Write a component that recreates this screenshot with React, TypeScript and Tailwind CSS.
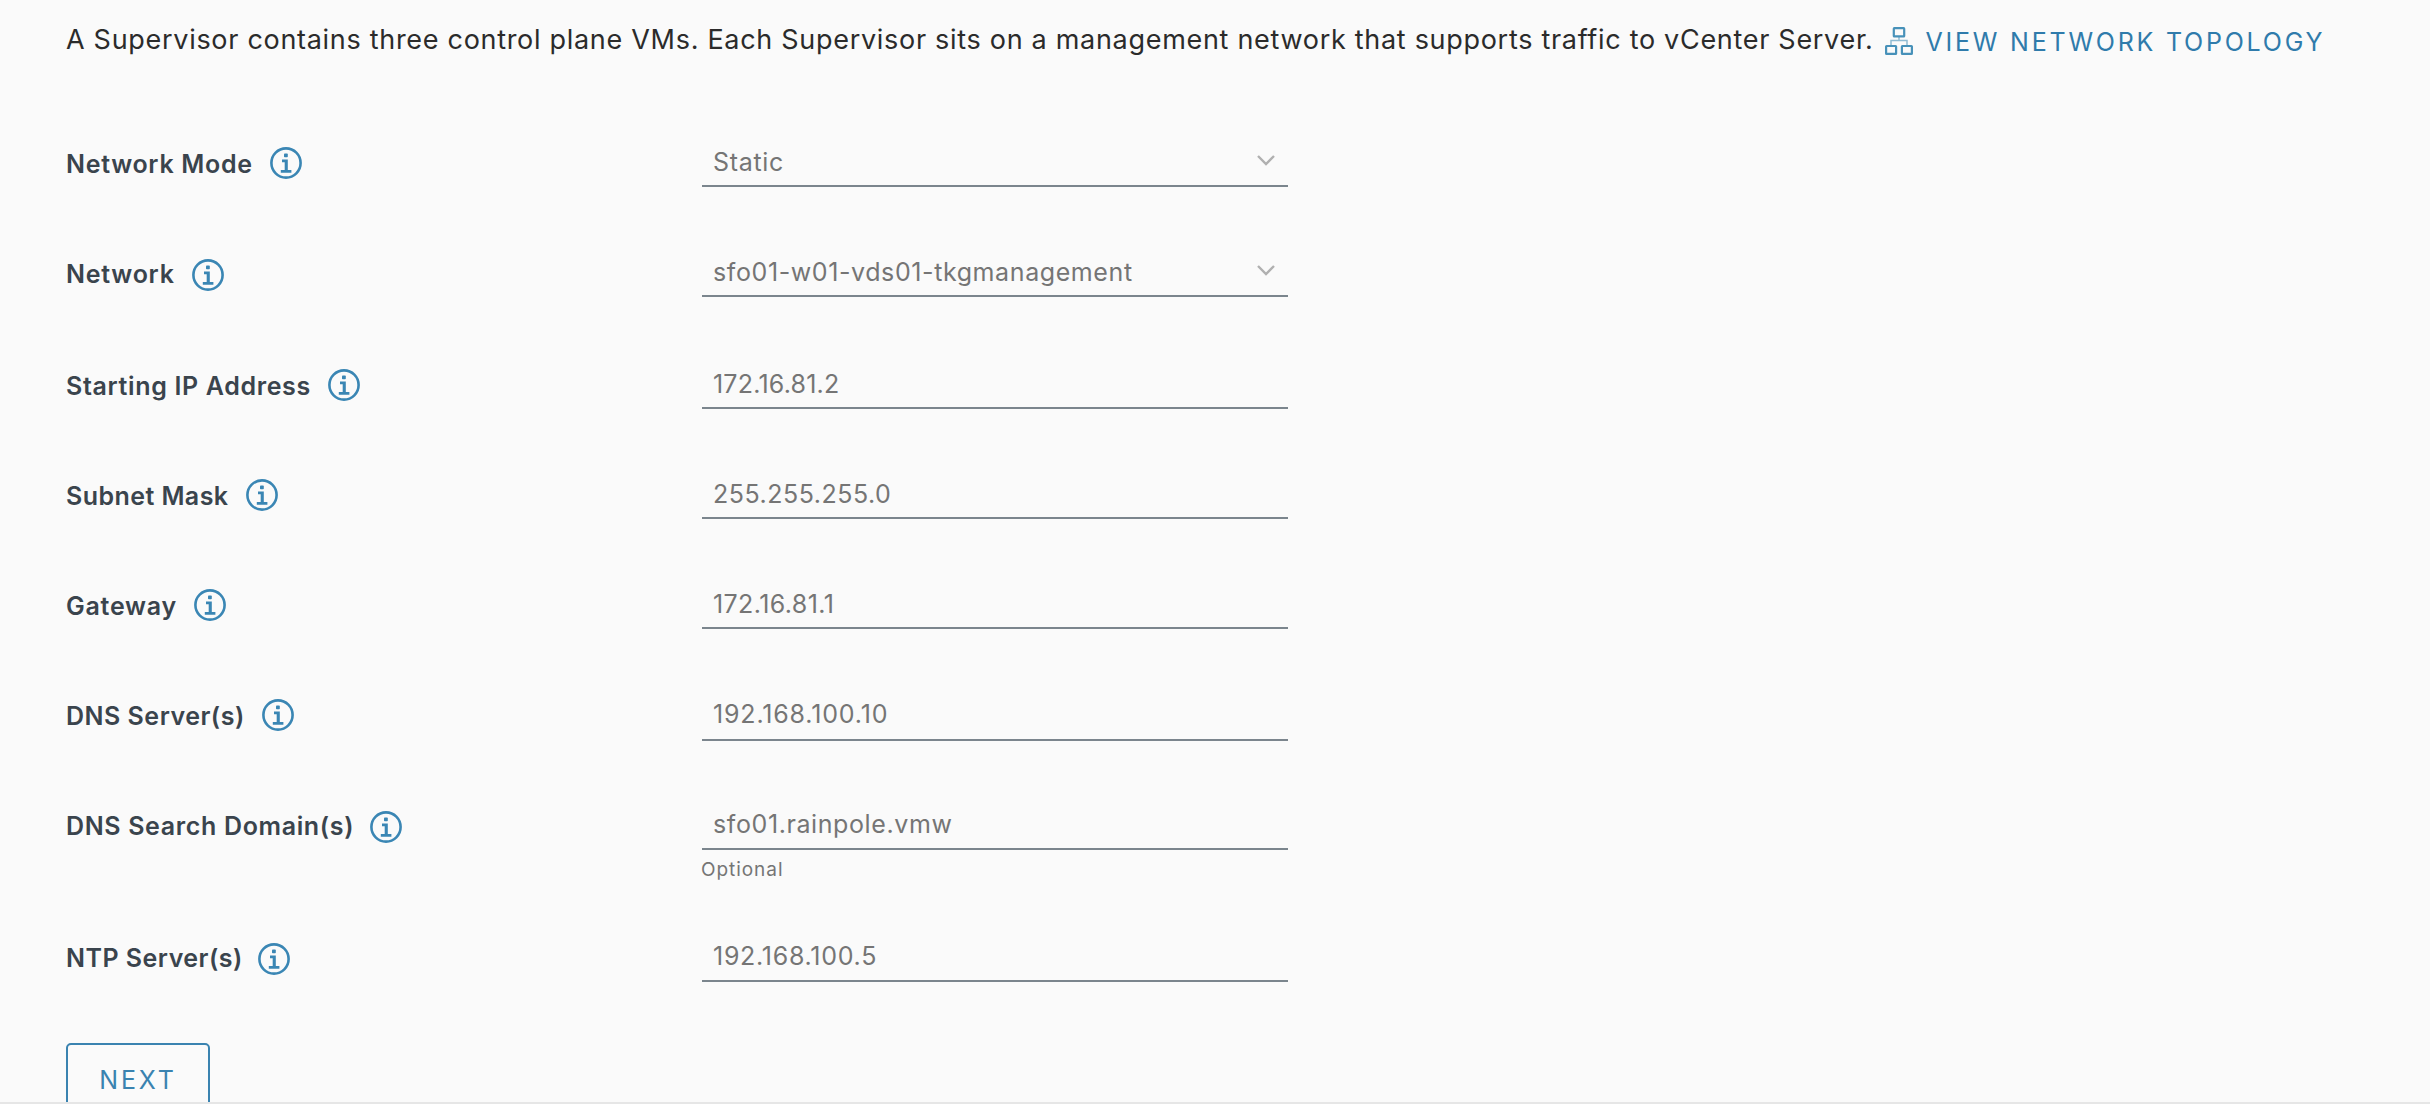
type Row = {
  label: string;
  value: string;
  select?: boolean;
  helper?: string;
  row: string;
  labelCls: string;
  iconCls: string;
  valueCls: string;
};

const rows: Row[] = [
  { label: "Network Mode", value: "Static", select: true, row: "h-[110px]", labelCls: "mb-2 tracking-[0.7px]", iconCls: "mb-2 ml-[17px]", valueCls: "pb-2 tracking-[0.68px]" },
  { label: "Network", value: "sfo01-w01-vds01-tkgmanagement", select: true, row: "h-[110px]", labelCls: "mb-2 tracking-[0.75px]", iconCls: "mb-1.5 ml-[17px]", valueCls: "pb-2 tracking-[0.6px]" },
  { label: "Starting IP Address", value: "172.16.81.2", row: "h-[112px]", labelCls: "mb-2 tracking-[0.65px]", iconCls: "mb-2 ml-[17px]", valueCls: "pb-2 tracking-[0.2px]" },
  { label: "Subnet Mask", value: "255.255.255.0", row: "h-[110px]", labelCls: "mb-2 tracking-[0.43px]", iconCls: "mb-2 ml-[17.5px]", valueCls: "pb-2 tracking-[0.51px]" },
  { label: "Gateway", value: "172.16.81.1", row: "h-[110px]", labelCls: "mb-2 tracking-[0.75px]", iconCls: "mb-2 ml-[17px]", valueCls: "pb-2 tracking-[0.4px]" },
  { label: "DNS Server(s)", value: "192.168.100.10", row: "h-[112px]", labelCls: "mb-2.5 tracking-[0.5px]", iconCls: "mb-2.5 ml-[17px]", valueCls: "pb-2.5 tracking-[0.83px]" },
  { label: "DNS Search Domain(s)", value: "sfo01.rainpole.vmw", helper: "Optional", row: "h-[109px]", labelCls: "mb-[9px] tracking-[0.65px]", iconCls: "mb-[7px] ml-4", valueCls: "pb-[9px] tracking-[0.6px]" },
  { label: "NTP Server(s)", value: "192.168.100.5", row: "h-[100px]", labelCls: "mb-[9px] tracking-[0.48px]", iconCls: "mb-[7px] ml-[15.5px]", valueCls: "pb-[9px] tracking-[0.72px]" },
];

function InfoIcon({ className }: { className: string }) {
  return (
    <svg viewBox="0 0 32 32" className={`size-8 shrink-0 text-[#3a86b4] ${className}`} fill="currentColor">
      <circle cx="16" cy="16" r="14.6" fill="none" stroke="currentColor" strokeWidth="2.6" />
      <rect x="14" y="6.6" width="3.8" height="3.6" rx="0.8" />
      <path d="M12 12.5h5.8v10.5h3.6v2.8H10.8v-2.8h3.9v-7.8H12z" />
    </svg>
  );
}

function TopologyIcon() {
  return (
    <svg viewBox="0 0 28 28" className="mt-[3px] ml-[11px] size-7 shrink-0" fill="none" stroke="#4791b9" strokeWidth="2.2">
      <rect x="8.8" y="1.2" width="10.4" height="8.2" rx="0.5" />
      <rect x="1.1" y="19" width="10" height="7.9" rx="0.5" />
      <rect x="16.9" y="19" width="10" height="7.9" rx="0.5" />
      <path d="M14 10v3.5M6 18v-4.5h16V18" strokeWidth="1.5" opacity="0.6" />
    </svg>
  );
}

export default function App() {
  return (
    <main className="flex h-[1104px] w-[2430px] overflow-hidden border-b-2 border-[#e6e6e6] bg-[#fafafa] pl-[65px] font-['Inter',sans-serif]">
      <div className="flex flex-1 flex-col">
        <header className="flex h-[77px] shrink-0 items-start pt-[24px] pl-px">
          <p className="text-[27px] leading-8 tracking-[0.7px] whitespace-nowrap text-[#2b2b2b]">
            A Supervisor contains three control plane VMs. Each Supervisor sits on a management network that supports traffic to vCenter Server.
          </p>
          <TopologyIcon />
          <a className="mt-0.5 ml-[13px] text-[25px] leading-8 tracking-[2.77px] whitespace-nowrap text-[#2f7bab]">VIEW NETWORK TOPOLOGY</a>
        </header>
        {rows.map((r) => (
          <section key={r.label} className="shrink-0">
            <div className={`flex items-end ${r.row}`}>
              <div className="flex w-[637px] items-end pl-px">
                <span className={`text-[25px] leading-[30px] font-semibold whitespace-nowrap text-[#3a444d] ${r.labelCls}`}>{r.label}</span>
                <InfoIcon className={r.iconCls} />
              </div>
              <div className={`flex w-[586px] items-end justify-between border-b-2 border-[#7b858d] pr-3 pl-[11px] text-[25px] leading-[30px] text-[#757575] ${r.valueCls}`}>
                <span>{r.value}</span>
                {r.select && (
                  <svg viewBox="0 0 20 12" className="mb-[11px] h-3 w-5" fill="none" stroke="#b0b0b0" strokeWidth="2.4">
                    <path d="M2 2l8 8 8-8" />
                  </svg>
                )}
              </div>
            </div>
            {r.helper && (
              <div className="h-8 pt-2 pl-[636px] text-[19px] leading-6 tracking-[0.95px] text-[#757575]">{r.helper}</div>
            )}
          </section>
        ))}
        <button className="mt-[61px] ml-px h-[66px] w-36 shrink-0 self-start rounded-[5px] border-2 border-[#3a83b0] pt-2 text-[25px] leading-[30px] tracking-[2.8px] text-[#3a83b0]">NEXT</button>
      </div>
    </main>
  );
}
